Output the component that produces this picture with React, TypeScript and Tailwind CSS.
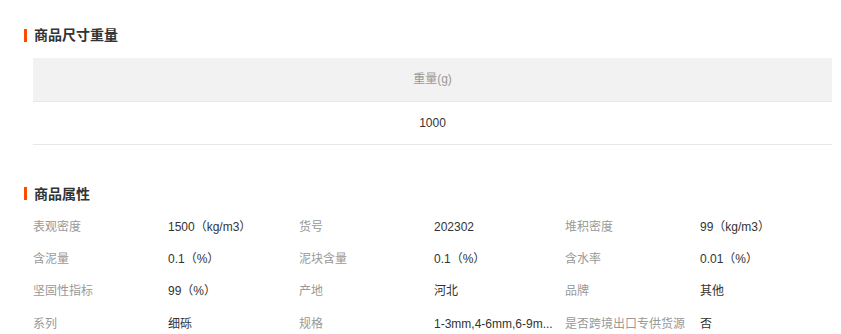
const attrs: [string, string][] = [
  ['表观密度', '1500（kg/m3）'],
  ['货号', '202302'],
  ['堆积密度', '99（kg/m3）'],
  ['含泥量', '0.1（%）'],
  ['泥块含量', '0.1（%）'],
  ['含水率', '0.01（%）'],
  ['坚固性指标', '99（%）'],
  ['产地', '河北'],
  ['品牌', '其他'],
  ['系列', '细砾'],
  ['规格', '1-3mm,4-6mm,6-9m...'],
  ['是否跨境出口专供货源', '否'],
];

function SectionTitle({ children }: { children: string }) {
  return (
    <div className="flex h-5 items-center">
      <span className="h-[13px] w-[3px] bg-[#ff4a00]" />
      <h3 className="pl-[7px] text-[14px] font-bold leading-5 text-[#333]">{children}</h3>
    </div>
  );
}

export default function App() {
  return (
    <div
      className="w-[841px] bg-white pl-6 pr-[9px] pt-[25px]"
      style={{ fontFamily: '"Liberation Sans", "Noto Sans CJK SC", sans-serif' }}
    >
      <SectionTitle>商品尺寸重量</SectionTitle>
      <table className="ml-[9px] mt-[13px] w-[799px] border-collapse text-[12px]">
        <thead>
          <tr className="h-[43px] border-b border-[#e8e8e8] bg-[#f2f2f2]">
            <th className="text-center font-normal text-[#999]">重量(g)</th>
          </tr>
        </thead>
        <tbody>
          <tr className="h-[43px] border-b border-[#e8e8e8]">
            <td className="text-center text-[#333]">1000</td>
          </tr>
        </tbody>
      </table>

      <div className="mt-[39px]">
        <SectionTitle>商品属性</SectionTitle>
      </div>
      <div className="ml-[9px] mt-[7px] grid w-[799px] grid-cols-[135px_131px_135px_131px_135px_132px] text-[12px]">
        {attrs.map(([label, value]) => (
          <div key={label} className="contents">
            <div className="flex h-[32.4px] items-center whitespace-nowrap text-[#999]">{label}</div>
            <div className="flex h-[32.4px] items-center whitespace-nowrap text-[#333]">{value}</div>
          </div>
        ))}
      </div>
    </div>
  );
}
